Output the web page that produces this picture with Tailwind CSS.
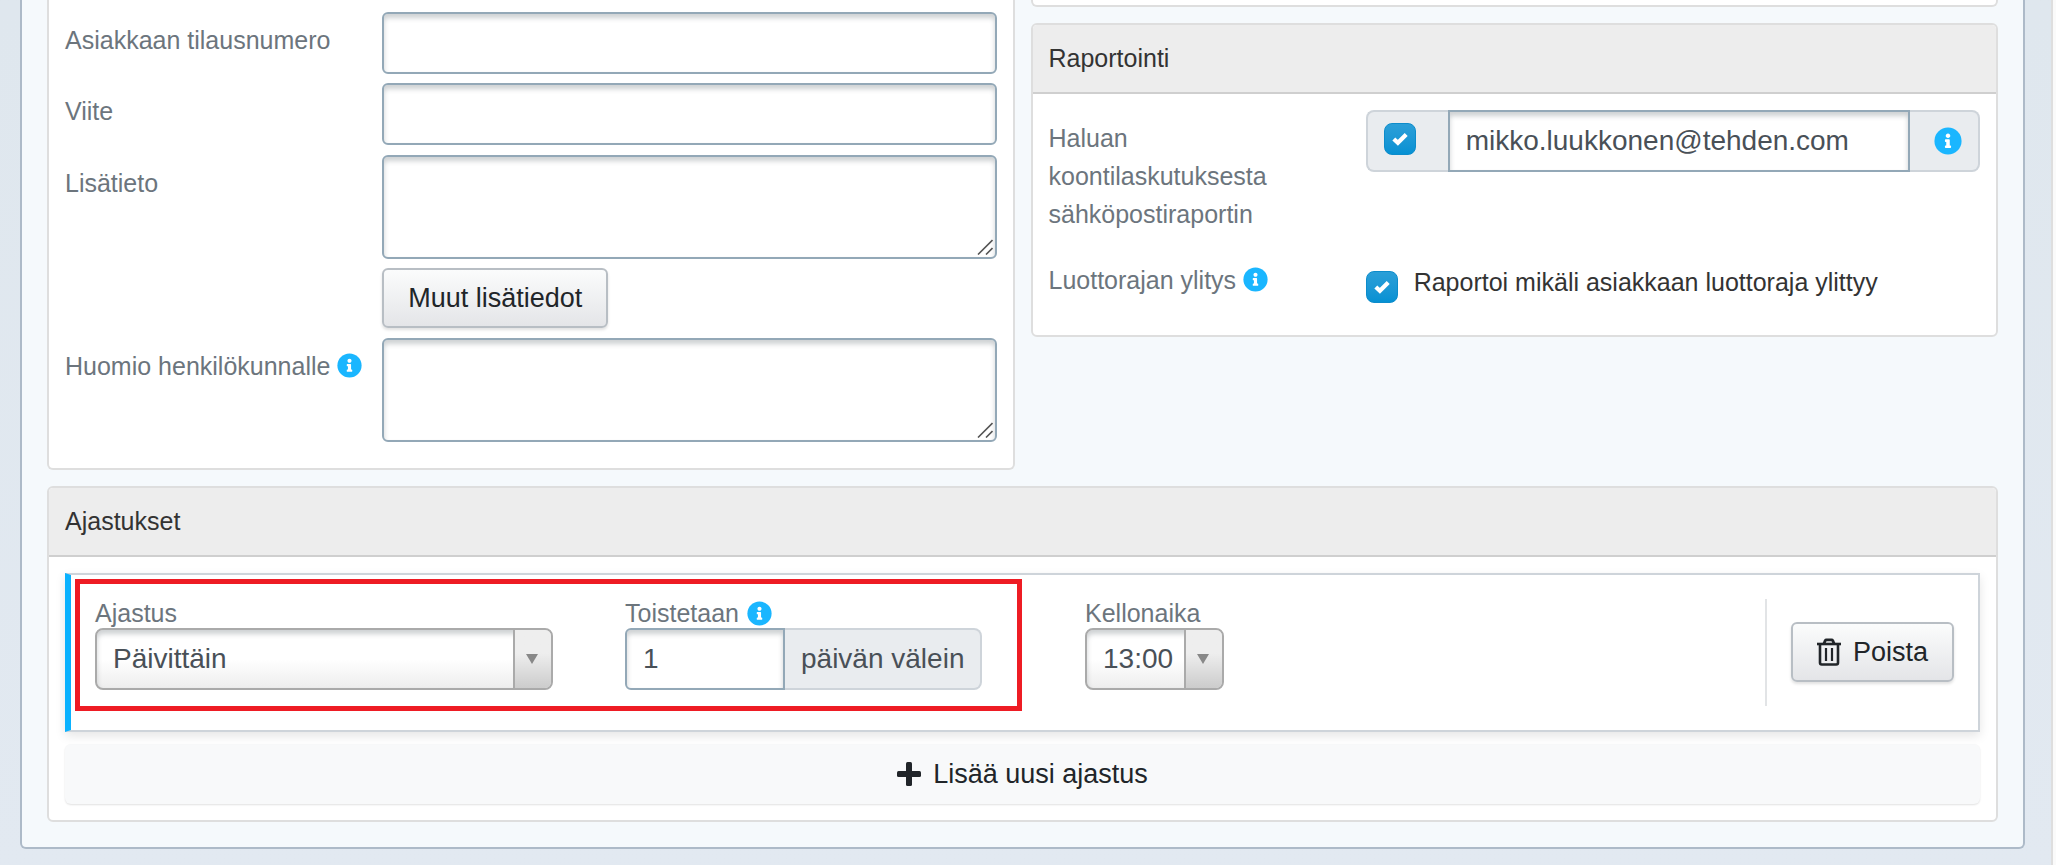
<!DOCTYPE html>

<html lang="fi">
    <head>
      <meta charset="utf-8">
      <title>Ajastukset</title>
      <meta name="viewport" content="width=device-width, initial-scale=1">
      <script src="https://cdn.jsdelivr.net/npm/@tailwindcss/browser@4"></script>
    </head>

    <body class="bg-[#fafafa] pr-[3px] font-['Liberation_Sans',Arial,sans-serif] text-[25px] leading-[38px] text-[#333]">
      <svg class="hidden">
        <symbol id="icon-info" viewBox="0 0 512 512">
          <circle cx="256" cy="256" r="248" fill="#1ab6ff" />
          <path fill="#fff" d="M256 118c23.200 0 42 18.800 42 42s-18.800 42-42 42-42-18.800-42-42 18.800-42 42-42zm56 254c0 6.600-5.400 12-12 12h-88c-6.600 0-12-5.400-12-12v-24c0-6.600 5.400-12 12-12h12v-64h-12c-6.600 0-12-5.400-12-12v-24c0-6.600 5.400-12 12-12h64c6.600 0 12 5.400 12 12v100h12c6.600 0 12 5.400 12 12v24z" />
        </symbol>
        <symbol id="icon-check" viewBox="0 0 16 16">
          <path d="M1.800 7.900 5.900 11.800 14.200 3.500" fill="none" stroke="#fff" stroke-width="4.200" />
        </symbol>
        <symbol id="icon-grip" viewBox="0 0 16 16">
          <path d="M1 15.500 15.500 1M9 15.500 15.500 9" fill="none" stroke="#555" stroke-width="1.600" />
        </symbol>
      </svg>

      <div class="min-h-screen border-r-2 border-[#dedede] bg-linear-to-b from-[#dfe7ee] to-[#e2e9f1] pl-5 pr-[26px] pb-4">
        <main class="rounded-b-md border-2 border-t-0 border-[#adbac8] bg-[#f5f9fc] px-[25px] pb-[25px]">
          <div class="grid grid-cols-2 items-start gap-4">

            <section class="rounded-b-md border-2 border-t-0 border-[#dedede] bg-white px-4 pt-3 pb-[26px]">
              <div class="flex flex-col gap-2.5">
                <div class="flex flex-col gap-[9px]">
                  <div class="grid grid-cols-3 gap-x-5">
                    <label for="orderNumber" class="pt-[9px] text-[#6c757d]">Asiakkaan tilausnumero</label>
                    <input type="text" id="orderNumber" class="col-span-2 h-[62px] rounded-md border-2 border-[#93a8b7] bg-white px-4 text-[28px] text-[#495057] shadow-[inset_0_4px_5px_rgba(60,70,80,0.25)]">
                  </div>
                  <div class="grid grid-cols-3 gap-x-5">
                    <label for="reference" class="pt-[9px] text-[#6c757d]">Viite</label>
                    <input type="text" id="reference" class="col-span-2 h-[62px] rounded-md border-2 border-[#93a8b7] bg-white px-4 text-[28px] text-[#495057] shadow-[inset_0_4px_5px_rgba(60,70,80,0.25)]">
                  </div>
                </div>
                <div class="grid grid-cols-3 gap-x-5">
                  <label for="extraInfo" class="pt-[9px] text-[#6c757d]">Lisätieto</label>
                  <div class="col-span-2 flex flex-col items-start gap-[9px]">
                    <div class="relative flex w-full">
                      <textarea id="extraInfo" class="h-[104px] w-full resize-none rounded-md border-2 border-[#93a8b7] bg-white px-4 py-2 text-[28px] text-[#495057] shadow-[inset_0_4px_5px_rgba(60,70,80,0.25)]"></textarea>
                      <svg class="pointer-events-none absolute right-1 bottom-1 size-4"><use href="#icon-grip" /></svg>
                    </div>
                    <button type="button" class="h-[60px] rounded-md border-2 border-[#b8bec4] bg-linear-to-b from-[#fbfcfc] to-[#e4e5e8] px-6 text-[27px] text-[#212529] shadow-[0_2px_3px_rgba(0,0,0,0.12)]">Muut lisätiedot</button>
                  </div>
                </div>
                <div class="grid grid-cols-3 gap-x-5">
                  <label for="staffNote" class="flex items-start gap-[7px] pt-[9px] whitespace-nowrap text-[#6c757d]">Huomio henkilökunnalle
                    <svg class="mt-1.5 size-[25px] shrink-0"><use href="#icon-info" /></svg>
                  </label>
                  <div class="relative col-span-2 flex">
                    <textarea id="staffNote" class="h-[104px] w-full resize-none rounded-md border-2 border-[#93a8b7] bg-white px-4 py-2 text-[28px] text-[#495057] shadow-[inset_0_4px_5px_rgba(60,70,80,0.25)]"></textarea>
                    <svg class="pointer-events-none absolute right-1 bottom-1 size-4"><use href="#icon-grip" /></svg>
                  </div>
                </div>
              </div>
            </section>

            <div class="flex flex-col gap-4">
              <section class="h-[7px] rounded-b-md border-2 border-t-0 border-[#dedede] bg-white"></section>

              <section class="rounded-md border-2 border-[#dedede] bg-white">
                <h2 class="rounded-t-sm border-b-2 border-[#cfcfcf] bg-[#ededed] px-4 pt-[14px] pb-[15px]">Raportointi</h2>
                <div class="flex flex-col gap-[9px] px-4 pt-4 pb-[26px]">
                  <div class="grid grid-cols-3 gap-x-5">
                    <label for="reportEmail" class="pt-[9px] pb-2.5 text-[#6c757d]">Haluan koontilaskutuksesta sähköpostiraportin</label>
                    <div class="col-span-2 flex h-[62px]">
                      <div class="flex w-[82px] shrink-0 rounded-l-lg border-2 border-r-0 border-[#ced4da] bg-[#e9ecef] pt-[11px] pl-4">
                        <span class="relative size-8">
                          <input type="checkbox" id="reportEnabled" aria-label="Sähköpostiraportti" checked class="block size-8 appearance-none rounded-lg border border-[#0d8ccb] bg-linear-to-b from-[#2a9fd8] to-[#0591d3]">
                          <svg class="pointer-events-none absolute inset-2 size-4"><use href="#icon-check" /></svg>
                        </span>
                      </div>
                      <input type="email" id="reportEmail" value="mikko.luukkonen@tehden.com" class="min-w-0 flex-1 border-2 border-[#93a8b7] bg-white px-4 text-[28px] text-[#495057] shadow-[inset_0_4px_5px_rgba(60,70,80,0.25)]">
                      <div class="flex shrink-0 items-center rounded-r-lg border-2 border-l-0 border-[#ced4da] bg-[#e9ecef] pr-4 pl-6">
                        <svg class="size-7"><use href="#icon-info" /></svg>
                      </div>
                    </div>
                  </div>
                  <div class="grid grid-cols-3 gap-x-5">
                    <div class="flex items-start gap-[7px] pt-[9px] pb-2.5 whitespace-nowrap text-[#6c757d]">Luottorajan ylitys
                      <svg class="mt-1.5 size-[25px] shrink-0"><use href="#icon-info" /></svg>
                    </div>
                    <div class="col-span-2 flex gap-4 pt-[11px]">
                      <span class="relative mt-2 size-8 shrink-0">
                        <input type="checkbox" id="limitReport" checked class="block size-8 appearance-none rounded-lg border border-[#0d8ccb] bg-linear-to-b from-[#2a9fd8] to-[#0591d3]">
                        <svg class="pointer-events-none absolute inset-2 size-4"><use href="#icon-check" /></svg>
                      </span>
                      <label for="limitReport">Raportoi mikäli asiakkaan luottoraja ylittyy</label>
                    </div>
                  </div>
                </div>
              </section>
            </div>
          </div>

          <section class="mt-4 rounded-md border-2 border-[#dedede] bg-white">
            <h2 class="rounded-t-sm border-b-2 border-[#cfcfcf] bg-[#ededed] px-4 pt-[14px] pb-[15px]">Ajastukset</h2>
            <div class="flex flex-col gap-3 p-4">
              <div class="relative flex border-2 border-l-6 border-[#ced4da] border-l-[#0ab2ff] bg-white p-6 shadow-[0_4px_10px_rgba(0,0,0,0.1)]">
                <div class="w-[530px] pr-18 pb-4">
                  <label for="schedule" class="block leading-[29px] text-[#6c757d]">Ajastus</label>
                  <div class="relative">
                    <select id="schedule" class="block h-[62px] w-full appearance-none rounded-lg border-2 border-[#aaa] bg-linear-to-b from-white from-50% to-[#eee] pr-12 pl-4 text-[28px] text-[#495057] shadow-[inset_0_4px_5px_rgba(60,70,80,0.25)]">
                      <option>Päivittäin</option>
                    </select>
                    <span class="pointer-events-none absolute inset-y-0.5 right-0.5 flex w-[38px] items-center justify-center rounded-r-md border-l-2 border-[#aaa] bg-linear-to-b from-[#eee] from-40% to-[#ccc] pr-0.5">
                      <svg class="h-2.5 w-3" viewBox="0 0 12 10"><path d="M0 0h12L6 10z" fill="#888" /></svg>
                    </span>
                  </div>
                </div>
                <div class="w-[460px]">
                  <label for="interval" class="flex items-center gap-2 leading-[29px] text-[#6c757d]">Toistetaan
                    <svg class="size-[25px]"><use href="#icon-info" /></svg>
                  </label>
                  <div class="flex h-[62px]">
                    <input type="text" id="interval" value="1" class="w-40 rounded-l-md border-2 border-[#93a8b7] bg-white px-4 text-[28px] text-[#495057] shadow-[inset_0_4px_5px_rgba(60,70,80,0.25)]">
                    <span class="flex items-center rounded-r-lg border-2 border-l-0 border-[#ced4da] bg-[#e9ecef] px-4 text-[28px] text-[#495057]">päivän välein</span>
                  </div>
                </div>
                <div>
                  <label for="time" class="block leading-[29px] text-[#6c757d]">Kellonaika</label>
                  <div class="relative">
                    <select id="time" class="block h-[62px] w-[139px] appearance-none rounded-lg border-2 border-[#aaa] bg-linear-to-b from-white from-50% to-[#eee] pl-4 text-[28px] text-[#495057] shadow-[inset_0_4px_5px_rgba(60,70,80,0.25)]">
                      <option>13:00</option>
                    </select>
                    <span class="pointer-events-none absolute inset-y-0.5 right-0.5 flex w-[38px] items-center justify-center rounded-r-md border-l-2 border-[#aaa] bg-linear-to-b from-[#eee] from-40% to-[#ccc] pr-0.5">
                      <svg class="h-2.5 w-3" viewBox="0 0 12 10"><path d="M0 0h12L6 10z" fill="#888" /></svg>
                    </span>
                  </div>
                </div>
                <div class="ml-auto flex items-center border-l-2 border-[#e2e4e6] pb-px pl-6">
                  <button type="button" class="flex h-[60px] items-center gap-3 rounded-md border-2 border-[#b8bec4] bg-linear-to-b from-[#fbfcfc] to-[#e4e5e8] px-6 text-[27px] text-[#212529] shadow-[0_2px_3px_rgba(0,0,0,0.12)]">
                    <svg class="h-7 w-6" viewBox="0 0 24 28" fill="none" stroke="#212529"><path d="M0 6h24" stroke-width="2.600" /><path d="M7 5.500 8.200 2.600Q8.600 1.900 9.400 1.900h5.200q.8 0 1.200.7L17 5.500" stroke-width="2.800" /><path d="M3 6v18.800q0 1.700 1.700 1.700h14.600q1.700 0 1.700-1.700V6" stroke-width="2.600" /><path d="M9 10v13M15 10v13" stroke-width="2.200" /></svg>
                    Poista
                  </button>
                </div>

                <div class="pointer-events-none absolute top-1 left-1 h-[132px] w-[947px] border-5 border-[#ee1c24]"></div>
              </div>

              <button type="button" class="flex h-[60px] items-center justify-center gap-3 rounded-md bg-[#f8f9fa] text-[27px] text-[#212529] shadow-[0_1px_2px_rgba(0,0,0,0.12)]">
                <svg class="size-6" viewBox="0 0 24 24" fill="#212529"><rect x="9" y="0" width="6" height="24" rx="1.500" /><rect x="0" y="9" width="24" height="6" rx="1.500" /></svg>
                Lisää uusi ajastus
              </button>
            </div>
          </section>
        </main>
      </div>
    </body>
</html>
